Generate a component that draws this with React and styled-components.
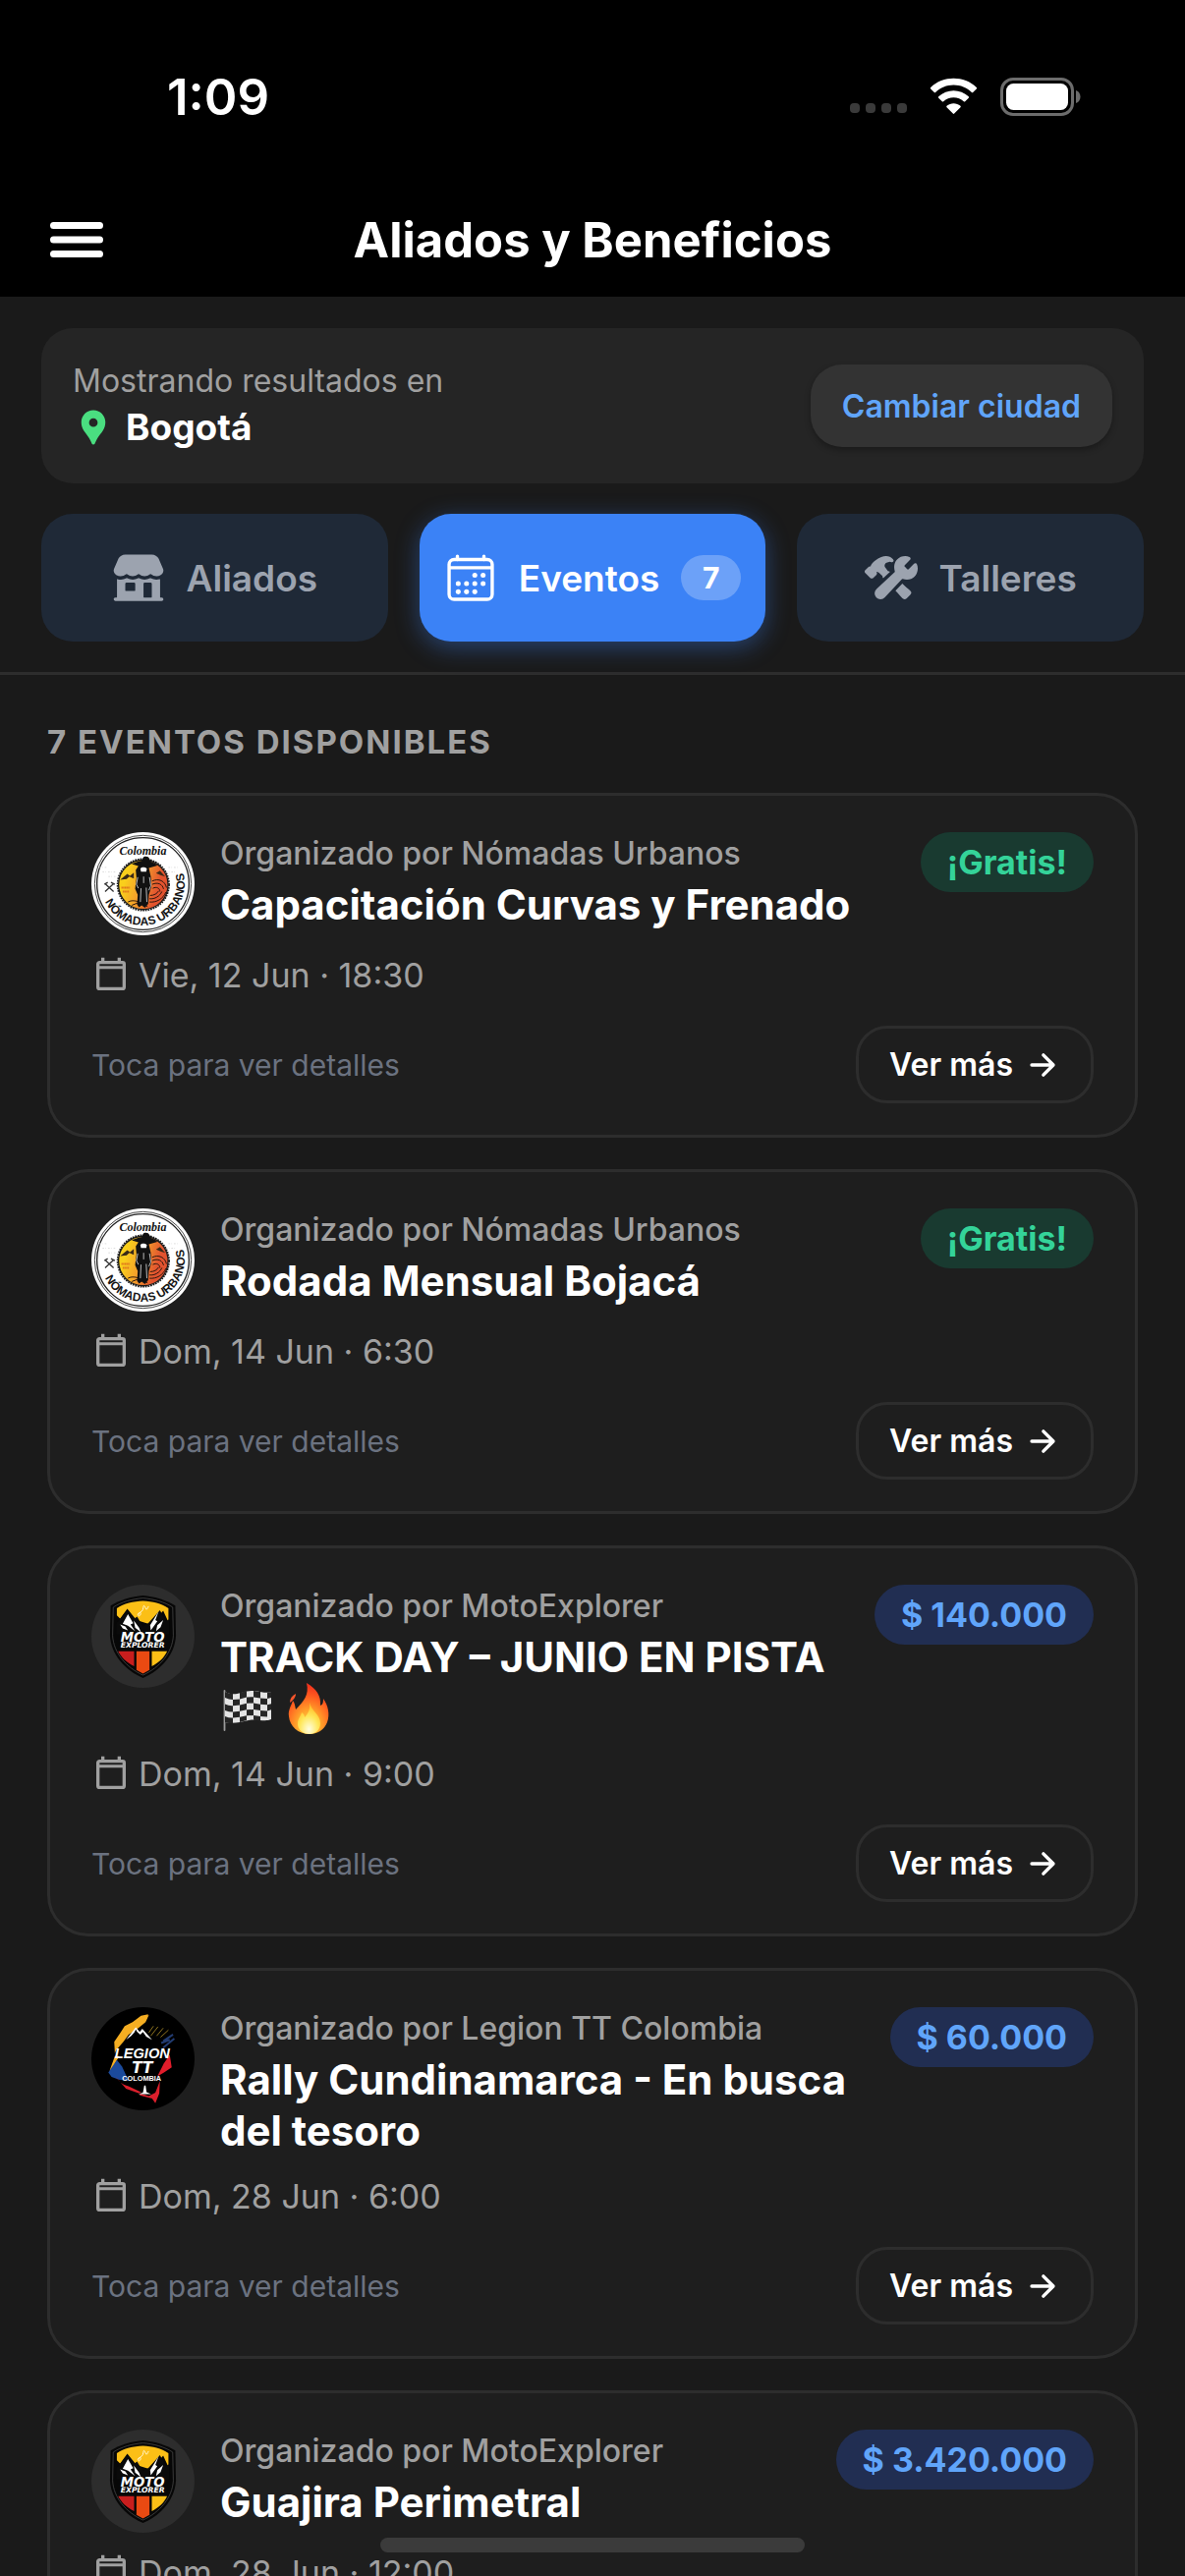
import React, { useState } from "react";
import styled, { createGlobalStyle, css } from "styled-components";
import {
  IoStorefront,
  IoCalendarOutline,
  IoConstruct,
  IoArrowForward,
} from "react-icons/io5";
import { MdLocationPin } from "react-icons/md";

const GlobalStyle = createGlobalStyle`
  *, *::before, *::after { box-sizing: border-box; }
  body {
    margin: 0;
    background: #1a1a1a;
    color: #fff;
    font-family: Inter, Roboto, "Liberation Sans", sans-serif;
    -webkit-font-smoothing: antialiased;
  }
  h1, h2, h3, p, ul { margin: 0; padding: 0; }
  button { font-family: inherit; border: 0; cursor: pointer; }
`;

const Screen = styled.div`
  height: 100vh;
  display: flex;
  flex-direction: column;
  overflow: hidden;
`;

const Header = styled.header`
  flex: none;
  background: #000;
`;

const StatusBar = styled.div`
  height: 186px;
  padding: 10px 106px 0 170px;
  display: flex;
  align-items: center;
  justify-content: space-between;
`;

const Clock = styled.time`
  font-size: 51px;
  font-weight: 600;
`;

const StatusIcons = styled.div`
  display: flex;
  align-items: center;
  gap: 22px;
  svg { display: block; }
`;

const NavBar = styled.div`
  height: 116px;
  padding: 0 48px;
  display: grid;
  grid-template-columns: 1fr auto 1fr;
  align-items: center;
`;

const MenuButton = styled.button`
  width: 60px;
  height: 60px;
  padding: 0;
  background: transparent;
  svg { display: block; }
`;

const Title = styled.h1`
  font-size: 49px;
  font-weight: 700;
`;

const Filters = styled.section`
  flex: none;
  padding: 32px 42px 31px;
  border-bottom: 3px solid #2d2d2d;
  display: flex;
  flex-direction: column;
  gap: 31px;
`;

const CityBox = styled.div`
  min-height: 158px;
  padding: 0 32px;
  border-radius: 32px;
  background: #252525;
  display: flex;
  align-items: center;
  justify-content: space-between;
`;

const CityLabel = styled.p`
  font-size: 32px;
  line-height: 46px;
  color: #a0a0a0;
`;

const CityName = styled.p`
  display: flex;
  align-items: center;
  gap: 12px;
  padding-bottom: 2px;
  font-size: 37px;
  line-height: 48px;
  font-weight: 700;
  svg { color: #4ade80; }
`;

const CityButton = styled.button`
  height: 84px;
  padding: 0 32px;
  border-radius: 32px;
  background: #333;
  color: #60a5fa;
  font-size: 32px;
  font-weight: 600;
  box-shadow: 0 3px 6px rgba(0, 0, 0, 0.3);
`;

const Tabs = styled.nav`
  display: grid;
  grid-template-columns: repeat(3, 1fr);
  gap: 32px;
`;

const Tab = styled.button`
  height: 130px;
  padding: 0;
  border-radius: 32px;
  display: flex;
  align-items: center;
  justify-content: center;
  gap: 22px;
  font-size: 37px;
  font-weight: 600;
  background: #1f2937;
  color: #9ca3af;
  ${(p) =>
    p.$active &&
    css`
      background: #3b82f6;
      color: #fff;
      box-shadow: 0 6px 24px rgba(59, 130, 246, 0.4);
    `}
`;

const TabCount = styled.span`
  min-width: 61px;
  height: 46px;
  border-radius: 23px;
  display: flex;
  align-items: center;
  justify-content: center;
  background: rgba(255, 255, 255, 0.25);
  font-size: 30px;
  font-weight: 700;
`;

const List = styled.main`
  flex: 1;
  min-height: 0;
  padding: 48px;
  overflow-y: auto;
  scrollbar-width: none;
`;

const ListTitle = styled.h2`
  padding-bottom: 32px;
  font-size: 33px;
  line-height: 40px;
  font-weight: 700;
  letter-spacing: 2px;
  text-transform: uppercase;
  color: #a0a0a0;
`;

const Cards = styled.ul`
  list-style: none;
  display: flex;
  flex-direction: column;
  gap: 32px;
`;

const Card = styled.li`
  padding: 37px 42px 32px;
  border: 3px solid #2d2d2d;
  border-radius: 42px;
  background: #1e1e1e;
`;

const CardTop = styled.div`
  display: flex;
  align-items: flex-start;
  gap: 26px;
`;

const Avatar = styled.div`
  flex: none;
  width: 105px;
  height: 105px;
  svg { display: block; width: 100%; height: 100%; }
`;

const CardHeading = styled.div`
  flex: 1;
  min-width: 0;
`;

const Organizer = styled.p`
  padding-bottom: 4px;
  font-size: 32px;
  line-height: 44px;
  font-weight: 500;
  color: #a0a0a0;
`;

const EventName = styled.h3`
  font-size: 42px;
  line-height: 52px;
  font-weight: 700;
`;

const Emoji = styled.svg`
  width: 52px;
  height: 52px;
  margin-right: 12px;
  vertical-align: top;
`;

const Price = styled.span`
  flex: none;
  height: 61px;
  padding: 0 27px;
  border-radius: 31px;
  display: flex;
  align-items: center;
  font-size: 34px;
  font-weight: 700;
  background: ${(p) => (p.$free ? "#193a30" : "#212e52")};
  color: ${(p) => (p.$free ? "#34d399" : "#60a5fa")};
`;

const When = styled.p`
  margin-top: 18px;
  display: flex;
  align-items: center;
  gap: 8px;
  font-size: 34px;
  line-height: 46px;
  color: #a0a0a0;
`;

const CardBottom = styled.div`
  margin-top: 28px;
  display: flex;
  align-items: center;
  justify-content: space-between;
`;

const Hint = styled.span`
  font-size: 30px;
  color: #6b7280;
`;

const MoreButton = styled.button`
  height: 79px;
  padding: 0 31px;
  border: 3px solid #2d2d2d;
  border-radius: 32px;
  display: flex;
  align-items: center;
  gap: 12px;
  background: transparent;
  color: #fff;
  font-size: 32px;
  font-weight: 600;
`;

const HomeIndicator = styled.div`
  position: fixed;
  left: 50%;
  bottom: 24px;
  width: 432px;
  height: 15px;
  margin-left: -216px;
  border-radius: 8px;
  background: #3b3b3b;
`;

const Signal = () => (
  <svg width="58" height="38" viewBox="0 0 58 38" aria-hidden="true">
    {[5, 21, 37, 53].map((x) => (
      <rect key={x} x={x - 5} y="26" width="10" height="10" rx="4" fill="#3a3a3a" />
    ))}
  </svg>
);

const Wifi = () => (
  <svg width="51" height="38" viewBox="0 0 51 38" fill="#fff" aria-hidden="true">
    <path d="M25.5 7.6c7 0 13.500 2.700 18.400 7.400.4.400 1 .4 1.300 0l3.600-3.600c.4-.4.400-1 0-1.400C36.400-2.300 14.600-2.300 2.200 10c-.4.400-.4 1 0 1.400l3.600 3.600c.4.400 1 .4 1.300 0 4.900-4.700 11.500-7.400 18.400-7.400z" />
    <path d="M25.500 20.300c3.800 0 7.500 1.400 10.300 4 .4.400 1 .4 1.400 0l3.600-3.600c.4-.4.400-1 0-1.400-8.600-8.200-22-8.200-30.600 0-.4.400-.4 1 0 1.400l3.600 3.600c.4.400 1 .4 1.400 0 2.800-2.600 6.500-4 10.300-4z" />
    <path d="M32.500 30.200c.4-.4.400-1 0-1.400-4-3.500-10-3.500-14 0-.4.400-.4 1 0 1.400l6.300 6.400c.4.400 1 .4 1.400 0z" />
  </svg>
);

const Battery = () => (
  <svg width="82" height="39" viewBox="0 0 82 39" aria-hidden="true">
    <rect x="1.500" y="1.500" width="72" height="36" rx="11.500" fill="none" stroke="#6c6c6c" strokeWidth="3" />
    <rect x="6" y="6" width="63" height="27" rx="7.500" fill="#fff" />
    <path d="M77 13c3 1.200 4.500 3.500 4.500 6.500S80 24.800 77 26z" fill="#6c6c6c" />
  </svg>
);

const MenuIcon = () => (
  <svg width="60" height="60" viewBox="0 0 60 60" aria-hidden="true">
    <path d="M6.500 15.500h47M6.500 30h47M6.500 44.500h47" stroke="#fff" strokeWidth="7" strokeLinecap="round" />
  </svg>
);

const CalendarIcon = () => (
  <svg width="40" height="40" viewBox="0 0 24 24" fill="currentColor" aria-hidden="true">
    <path d="M19 19H5V8h14m0-5h-1V1h-2v2H8V1H6v2H5c-1.110 0-2 .89-2 2v14a2 2 0 0 0 2 2h14a2 2 0 0 0 2-2V5a2 2 0 0 0-2-2zM5 5h14v1.200H5z" fillRule="evenodd" />
  </svg>
);

const FlagEmoji = () => (
  <Emoji viewBox="0 0 52 52" role="img" aria-label="Bandera a cuadros">
    <path d="M4.500 8v40" stroke="#9b9b9b" strokeWidth="1.800" strokeLinecap="round" />
    <path d="M5 9C16 15 24 7 34 8s12 3 18 1v28c-7 3-14-1-23 1s-16 4-24 2z" fill="#e4e4e4" />
    <g fill="#262626">
      <path d="M5 9q4 2 8 2v6q-4 0-8-2zM20 10l7-2v6.500l-7 2zM34 8l7 1v6.500l-7-1zM48 10l4-1v6l-4 1z" />
      <path d="M13 17l7-.5v6l-7 .7zM27 14.500l7-.3v6.300l-7 .3zM41 15.500l7 .5v6.300l-7-.5z" />
      <path d="M5 21.500q4 2 8 1.700v6.300q-4 0-8-1.500zM20 22.500l7-1.700v6.500l-7 1.500zM34 20.500l7 1.300v6.200l-7-1zM48 22.300l4-1v6l-4 1.200z" />
      <path d="M13 29.500l7-.7v6l-7 .8zM27 27.300l7-.3v6l-7 .3zM41 28l7 .5v6l-7-.5z" />
      <path d="M5 34q4 1.800 8 1.600V41q-5 .5-8-1zM20 34.800l7-1.500V38l-7 2zM34 33l7 1v4.500l-7-.8z" />
    </g>
  </Emoji>
);

const FireEmoji = () => (
  <Emoji viewBox="0 0 52 52" role="img" aria-label="Fuego">
    <defs>
      <radialGradient id="fire" cx="0.5" cy="0.850" r="0.800">
        <stop offset="0" stopColor="#ffe14d" />
        <stop offset="0.400" stopColor="#ffa02a" />
        <stop offset="0.750" stopColor="#ff5a1f" />
        <stop offset="1" stopColor="#f2331d" />
      </radialGradient>
      <radialGradient id="core" cx="0.500" cy="0.850" r="0.700">
        <stop offset="0" stopColor="#fffde0" />
        <stop offset="0.600" stopColor="#ffe75a" />
        <stop offset="1" stopColor="#ffc22e" />
      </radialGradient>
    </defs>
    <path d="M24 0c10 6 15 13 14 23 3-1 3-4 3-7 5 7 7 16 4 24-3 8-10 12-18 12C15 52 7 44 6 34c-1-6 2-10 4-16 2 2 2 5 3 9 8-8 14-15 11-27z" fill="url(#fire)" />
    <path d="M13 11c-4 2-6 5-6 9 3-2 6-5 6-9z" fill="#f6552c" />
    <path d="M27 20c2 9 11 12 11 21 0 7-5 11-11 11s-13-4-12-12c1-5 3-6 4-10 2 1 3 3 3 5 4-4 6-9 5-15z" fill="url(#core)" />
  </Emoji>
);

const NomadasLogo = ({ id }) => (
  <svg viewBox="0 0 316 316" role="img" aria-label="Nómadas Urbanos">
    <defs>
      <linearGradient id={`sun-${id}`} x1="0" x2="1" y1="0.300" y2="0.600">
        <stop offset="0.150" stopColor="#f9cf1c" />
        <stop offset="0.450" stopColor="#f4a12a" />
        <stop offset="0.800" stopColor="#e2532f" />
      </linearGradient>
      <path id={`arc-${id}`} d="M40 208A128 128 0 0 0 280 120" />
    </defs>
    <circle cx="158" cy="158" r="158" fill="#fff" />
    <circle cx="158" cy="158" r="148" fill="none" stroke="#222" strokeWidth="2.500" />
    <circle cx="158" cy="158" r="141" fill="none" stroke="#222" strokeWidth="4" />
    <path d="M34 122h40M52 136h34M228 122h30M24 108h24M236 108h30" stroke="#ccc" strokeWidth="2" strokeDasharray="5 4 2 6" />
    <circle cx="159" cy="161" r="79" fill="none" stroke="#1b1b1b" strokeWidth="5" strokeDasharray="5 3" />
    <circle cx="159" cy="161" r="76" fill={`url(#sun-${id})`} stroke="#1b1b1b" strokeWidth="4" />
    <path d="M88 146l22-18 8 6 12-10v18l-14-6-8 8zM198 126l12-8 16 18-14-4z" fill="#3a2a18" />
    <g fill="none" stroke="#2b160e" strokeWidth="3">
      <path d="M186 150c20-10 40 0 44 20M186 160c18-8 32 0 35 14M188 172c12-6 22 0 22 10M178 214c22 2 42-10 50-30M178 204c16 2 32-8 38-22M180 194c12 0 22-6 26-14" />
      <path d="M112 214c14-8 34-4 60 14M124 224l20-8" />
    </g>
    <path d="M92 170h26M96 182h20" stroke="#e07a1c" strokeWidth="6" strokeDasharray="4 1" />
    <path d="M124 98c10-6 24-10 30-10l6-12c8-3 16-1 18 6l4 8c10 4 18 8 20 12l-26 8 6 26 2 30-8 26-2 28-10 12-10-8-8 6-6-8 2-30-8-18 4-34-2-24 8-12z" fill="#111" />
    <path d="M150 112c4-6 14-6 20 0l-2 9h-16z" fill="#fff" />
    <path d="M142 138l-4 22 6 12M178 138l4 26-6 14M152 172l-2 42M168 170l2 44M160 136v20" fill="none" stroke="#ddd" strokeWidth="2.500" />
    <text x="158" y="70" textAnchor="middle" fill="#111" fontFamily="'Liberation Serif', serif" fontStyle="italic" fontWeight="700" fontSize="36">Colombia</text>
    <path d="M42 158l26 24M68 158l-26 24M40 160l10-6M60 154l12 6" stroke="#333" strokeWidth="4" />
    <text fill="#151515" fontFamily="'Liberation Sans Narrow', 'Liberation Sans', sans-serif" fontWeight="700" fontSize="36">
      <textPath href={`#arc-${id}`} startOffset="50%" textAnchor="middle">NÓMADAS URBANOS</textPath>
    </text>
  </svg>
);

const MotoLogo = () => (
  <svg viewBox="0 0 316 316" role="img" aria-label="Moto Explorer">
    <circle cx="158" cy="158" r="158" fill="#2d2d2d" />
    <path d="M158 33C192 36 228 46 257 64L259 156C256 214 214 262 158 286C102 262 60 214 57 156L59 64C88 46 124 36 158 33z" fill="#070707" />
    <path d="M158 41C192 44 224 53 249 69L251 156C248 209 210 253 158 277C106 253 68 209 65 156L67 69C92 53 124 44 158 41z" fill="none" stroke="#444" strokeWidth="2.500" />
    <path d="M158 50c30 1 56 8 78 22v42l-16-34-38 42-20-6-24-8-28-34-22 30-10-10V72c22-14 50-21 80-22z" fill="#fbbf16" />
    <path d="M77 118l33-40 22 26 8-6 18 30 16-10 36-40 18 34 10-6v46H77z" fill="#0a0a0a" />
    <path d="M112 90l16 28-8 4 14 20-22-16-16-6zM130 110l16 22 6 14-18-14zM206 82l-10 26 6 4-20 28-2-16zM220 108l-8 22-14 12 4-18zM88 122l16 6 8 12-16-6z" fill="#fff" />
    <path d="M142 92c4-10 12-8 8 0s-10 2-4-4 12-6 13-18 6-2 8 4 6-4 8-8" fill="none" stroke="#fff6d0" strokeWidth="3" />
    <g fill="#fff" fontFamily="'DejaVu Sans', sans-serif" fontWeight="700" fontStyle="italic">
      <text x="157" y="175" fontSize="40" textAnchor="middle">MOTO</text>
      <text x="157" y="194" fontSize="23" textAnchor="middle">EXPLORER</text>
    </g>
    <path d="M82 204h49v46c-24-12-40-28-49-46z" fill="#c81e1e" />
    <path d="M138 204h40v57l-20 11-20-11z" fill="#ea4a12" />
    <path d="M185 204h47c-8 18-24 34-47 46z" fill="#fbbf16" />
  </svg>
);

const LegionLogo = () => (
  <svg viewBox="0 0 316 316" role="img" aria-label="Legion TT Colombia">
    <circle cx="158" cy="158" r="158" fill="#000" />
    <path d="M174 22l-6 18-24 14-14 16-30 10-8 24-14 18-6 20-2-36 18-26 14-22 24-12 26-20z" fill="#f5ae22" />
    <path d="M176 24l-30 10-22 26-34 22-14 32-4 22 26-30 16-22 30-20 22-18z" fill="#f5ae22" />
    <path d="M72 150l-16 44 14-6 2-16 14-22z" fill="#f5ae22" />
    <path d="M52 200l26-38 16 20 20 44-30-4-22-8z" fill="#1b4a9c" />
    <path d="M190 58l-14 20M204 60l-22 28M220 64l-20 24M236 70l-24 22" stroke="#8f7420" strokeWidth="3" />
    <path d="M250 84l-30 20M240 100l-26 10M254 96l-34 28" stroke="#223c72" strokeWidth="6" />
    <path d="M240 146l6 38-26 18-18 10 20-40z" fill="#e11d2b" />
    <path d="M74 212c10 14 20 26 40 30l38 18-6 4-40-14zM150 264l26 8 20-10 14-36-2 38-12 30-10-14-38-10z" fill="#dc1f2c" />
    <path d="M106 100l30-38 12 14 8-10 30 34-18-10-10-14-8 8-14-12-14 16z" fill="#fff" />
    <path d="M136 68l-10 26 18-10z" fill="#000" />
    <g fill="#fff" fontWeight="700" textAnchor="middle" fontFamily="'Liberation Sans', sans-serif">
      <text x="156" y="158" fontSize="44" fontStyle="italic" fontFamily="'Liberation Sans Narrow', 'Liberation Sans', sans-serif">LEGION</text>
      <text x="154" y="227" fontSize="22">COLOMBIA</text>
    </g>
    <text x="156" y="201" fill="#fff" fontFamily="'DejaVu Sans', sans-serif" fontSize="46" fontWeight="700" fontStyle="italic" textAnchor="middle">TT</text>
    <path d="M144 266l14-4 4-22h4l3 20 14 6z" fill="#fff" />
  </svg>
);

const logos = { nomadas: NomadasLogo, moto: MotoLogo, legion: LegionLogo };

const events = [
  { id: 1, logo: "nomadas", organizer: "Nómadas Urbanos", name: "Capacitación Curvas y Frenado", when: "Vie, 12 Jun · 18:30", price: null },
  { id: 2, logo: "nomadas", organizer: "Nómadas Urbanos", name: "Rodada Mensual Bojacá", when: "Dom, 14 Jun · 6:30", price: null },
  { id: 3, logo: "moto", organizer: "MotoExplorer", name: "TRACK DAY – JUNIO EN PISTA", emoji: true, when: "Dom, 14 Jun · 9:00", price: "$ 140.000" },
  { id: 4, logo: "legion", organizer: "Legion TT Colombia", name: "Rally Cundinamarca - En busca del tesoro", when: "Dom, 28 Jun · 6:00", price: "$ 60.000" },
  { id: 5, logo: "moto", organizer: "MotoExplorer", name: "Guajira Perimetral", when: "Dom, 28 Jun · 12:00", price: "$ 3.420.000" },
];

const tabs = [
  { key: "aliados", label: "Aliados", Icon: IoStorefront },
  { key: "eventos", label: "Eventos", Icon: IoCalendarOutline, count: 7 },
  { key: "talleres", label: "Talleres", Icon: IoConstruct },
];

const EventCard = ({ event }) => {
  const Logo = logos[event.logo];
  return (
    <Card>
      <CardTop>
        <Avatar>
          <Logo id={event.id} />
        </Avatar>
        <CardHeading>
          <Organizer>Organizado por {event.organizer}</Organizer>
          <EventName>
            {event.name}
            {event.emoji && (
              <>
                {" "}
                <FlagEmoji />
                <FireEmoji />
              </>
            )}
          </EventName>
        </CardHeading>
        <Price $free={!event.price}>{event.price || "¡Gratis!"}</Price>
      </CardTop>
      <When>
        <CalendarIcon />
        {event.when}
      </When>
      <CardBottom>
        <Hint>Toca para ver detalles</Hint>
        <MoreButton type="button">
          Ver más
          <IoArrowForward size={36} />
        </MoreButton>
      </CardBottom>
    </Card>
  );
};

export default function App() {
  const [active, setActive] = useState("eventos");
  return (
    <>
      <GlobalStyle />
      <Screen>
        <Header>
          <StatusBar>
            <Clock>1:09</Clock>
            <StatusIcons>
              <Signal />
              <Wifi />
              <Battery />
            </StatusIcons>
          </StatusBar>
          <NavBar>
            <MenuButton type="button" aria-label="Abrir menú">
              <MenuIcon />
            </MenuButton>
            <Title>Aliados y Beneficios</Title>
          </NavBar>
        </Header>
        <Filters>
          <CityBox>
            <div>
              <CityLabel>Mostrando resultados en</CityLabel>
              <CityName>
                <MdLocationPin size={42} />
                Bogotá
              </CityName>
            </div>
            <CityButton type="button">Cambiar ciudad</CityButton>
          </CityBox>
          <Tabs>
            {tabs.map(({ key, label, Icon, count }) => (
              <Tab key={key} type="button" $active={key === active} onClick={() => setActive(key)}>
                <Icon size={54} />
                {label}
                {count && <TabCount>{count}</TabCount>}
              </Tab>
            ))}
          </Tabs>
        </Filters>
        <List>
          <ListTitle>7 eventos disponibles</ListTitle>
          <Cards>
            {events.map((event) => (
              <EventCard key={event.id} event={event} />
            ))}
          </Cards>
        </List>
      </Screen>
      <HomeIndicator />
    </>
  );
}
